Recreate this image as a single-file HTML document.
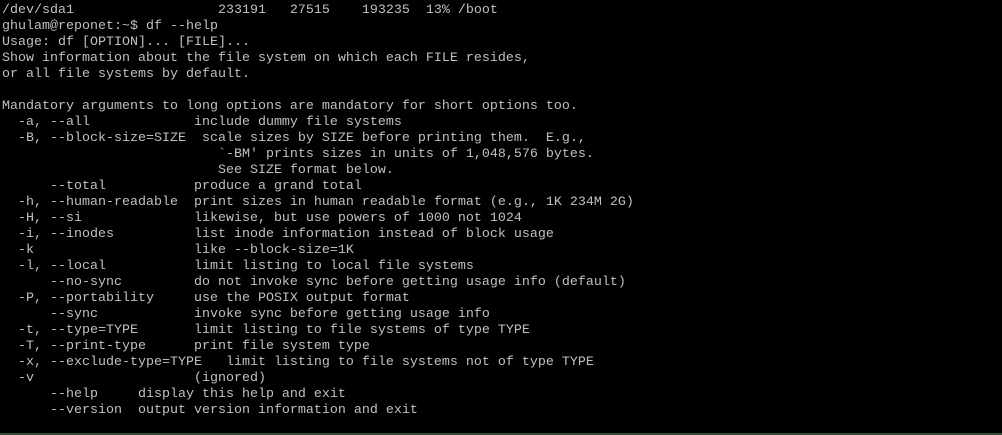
<!DOCTYPE html><html><head><style>
html,body{margin:0;padding:0;background:#000;width:1002px;height:435px;overflow:hidden}
pre{margin:0;position:absolute;left:2px;top:3px;font-family:"Liberation Mono",monospace;font-size:13.33px;line-height:16px;color:#c0c0c0}
.b{position:absolute;left:0;top:433px;width:1002px;height:2px;background:#3a4a3a}
</style></head><body><pre>/dev/sda1                  233191   27515    193235  13% /boot
ghulam@reponet:~$ df --help
Usage: df [OPTION]... [FILE]...
Show information about the file system on which each FILE resides,
or all file systems by default.

Mandatory arguments to long options are mandatory for short options too.
  -a, --all             include dummy file systems
  -B, --block-size=SIZE  scale sizes by SIZE before printing them.  E.g.,
                           `-BM' prints sizes in units of 1,048,576 bytes.
                           See SIZE format below.
      --total           produce a grand total
  -h, --human-readable  print sizes in human readable format (e.g., 1K 234M 2G)
  -H, --si              likewise, but use powers of 1000 not 1024
  -i, --inodes          list inode information instead of block usage
  -k                    like --block-size=1K
  -l, --local           limit listing to local file systems
      --no-sync         do not invoke sync before getting usage info (default)
  -P, --portability     use the POSIX output format
      --sync            invoke sync before getting usage info
  -t, --type=TYPE       limit listing to file systems of type TYPE
  -T, --print-type      print file system type
  -x, --exclude-type=TYPE   limit listing to file systems not of type TYPE
  -v                    (ignored)
      --help     display this help and exit
      --version  output version information and exit
</pre><div class="b"></div></body></html>
